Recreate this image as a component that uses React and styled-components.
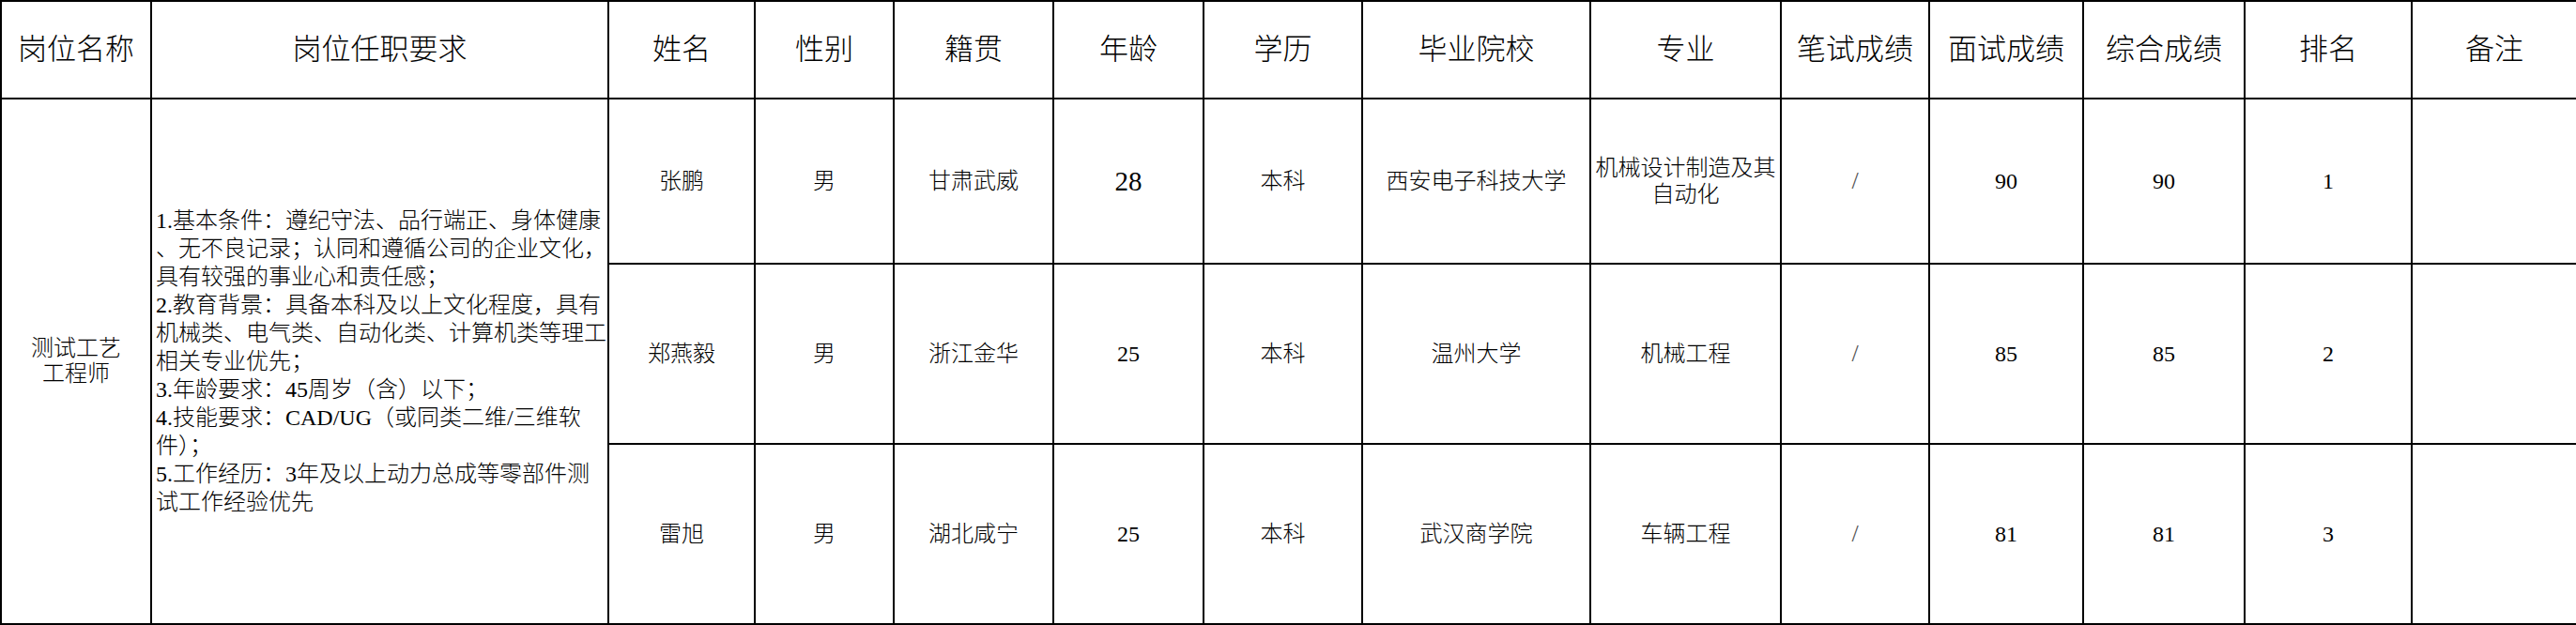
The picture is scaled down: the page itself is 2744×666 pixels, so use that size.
import React from 'react';
import styled, { createGlobalStyle } from 'styled-components';

const GlobalStyle = createGlobalStyle`
    body {
        margin: 0;
        background: #fff;
        color: #000;
        font-family: "Liberation Serif", "Noto Sans CJK SC", serif;
    }
`;

const columns = [
    { label: '岗位名称', w: 160 },
    { label: '岗位任职要求', w: 487 },
    { label: '姓名', w: 156 },
    { label: '性别', w: 148 },
    { label: '籍贯', w: 170 },
    { label: '年龄', w: 160 },
    { label: '学历', w: 169 },
    { label: '毕业院校', w: 243 },
    { label: '专业', w: 203 },
    { label: '笔试成绩', w: 158 },
    { label: '面试成绩', w: 164 },
    { label: '综合成绩', w: 172 },
    { label: '排名', w: 178 },
    { label: '备注', w: 176 },
];

// lines broken the way the source sheet breaks them
const requirements = [
    '1.基本条件：遵纪守法、品行端正、身体健康',
    '、无不良记录；认同和遵循公司的企业文化，',
    '具有较强的事业心和责任感；',
    '2.教育背景：具备本科及以上文化程度，具有',
    '机械类、电气类、自动化类、计算机类等理工',
    '相关专业优先；',
    '3.年龄要求：45周岁（含）以下；',
    '4.技能要求：CAD/UG（或同类二维/三维软',
    '件）；',
    '5.工作经历：3年及以上动力总成等零部件测',
    '试工作经验优先',
];

const candidates = [
    { name: '张鹏', sex: '男', origin: '甘肃武威', age: '28', big: true, edu: '本科', school: '西安电子科技大学', major: ['机械设计制造及其', '自动化'], written: '/', interview: '90', total: '90', rank: '1', h: 176 },
    { name: '郑燕毅', sex: '男', origin: '浙江金华', age: '25', edu: '本科', school: '温州大学', major: ['机械工程'], written: '/', interview: '85', total: '85', rank: '2', h: 192 },
    { name: '雷旭', sex: '男', origin: '湖北咸宁', age: '25', edu: '本科', school: '武汉商学院', major: ['车辆工程'], written: '/', interview: '81', total: '81', rank: '3', h: 192 },
];

function App() {
    return (
        <>
            <GlobalStyle />
            <Sheet>
                <colgroup>
                    {columns.map((c) => <Col key={c.label} $w={c.w} />)}
                </colgroup>
                <thead>
                    <Row $h={104}>
                        {columns.map((c) => <HeadCell key={c.label}>{c.label}</HeadCell>)}
                    </Row>
                </thead>
                <tbody>
                    {candidates.map((p, i) => (
                        <Row key={p.name} $h={p.h}>
                            {i === 0 && (
                                <>
                                    <Cell rowSpan={3} $lh={27}>测试工艺<br />工程师</Cell>
                                    <ReqCell rowSpan={3}>
                                        {requirements.map((line) => <ReqLine key={line}>{line}</ReqLine>)}
                                    </ReqCell>
                                </>
                            )}
                            <Cell>{p.name}</Cell>
                            <Cell>{p.sex}</Cell>
                            <Cell>{p.origin}</Cell>
                            <Cell $size={p.big ? 29 : 24}>{p.age}</Cell>
                            <Cell>{p.edu}</Cell>
                            <Cell>{p.school}</Cell>
                            <Cell>
                                {p.major.map((m) => <div key={m}>{m}</div>)}
                            </Cell>
                            <Cell><Slash>{p.written}</Slash></Cell>
                            <Cell>{p.interview}</Cell>
                            <Cell>{p.total}</Cell>
                            <Cell>{p.rank}</Cell>
                            <Cell />
                        </Row>
                    ))}
                </tbody>
            </Sheet>
        </>
    );
}

const Sheet = styled.table`
    border-collapse: collapse;
    table-layout: fixed;
    width: 2744px;
    font-family: "Liberation Serif", "Noto Sans CJK SC", serif;
`;

const Col = styled.col`
    width: ${(p) => p.$w}px;
`;

const Row = styled.tr`
    height: ${(p) => p.$h}px;
`;

const HeadCell = styled.th`
    border: 2px solid #000;
    padding: 0;
    font-size: 31px;
    font-weight: 300;
    line-height: 36px;
    text-align: center;
    vertical-align: middle;
    white-space: nowrap;
`;

const Cell = styled.td`
    border: 2px solid #000;
    padding: 0;
    font-size: ${(p) => p.$size || 24}px;
    font-weight: 300;
    line-height: ${(p) => p.$lh || 28}px;
    text-align: center;
    vertical-align: middle;
    white-space: nowrap;
`;

const ReqCell = styled.td`
    border: 2px solid #000;
    padding: 0 0 0 4px;
    font-size: 24px;
    font-weight: 300;
    line-height: 30px;
    text-align: left;
    vertical-align: middle;
`;

const ReqLine = styled.div`
    white-space: nowrap;
`;

const Slash = styled.span`
    color: #555;
    font-size: 26px;
`;

export default App
